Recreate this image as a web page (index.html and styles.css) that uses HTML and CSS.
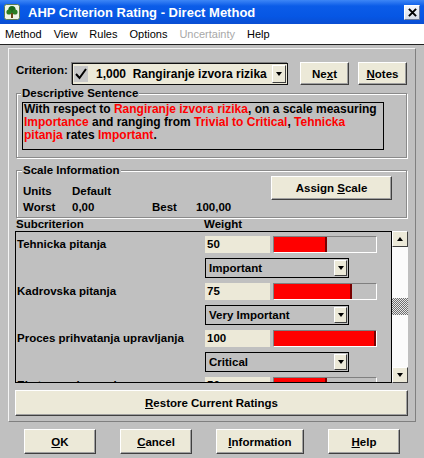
FILE: index.html
```html
<!DOCTYPE html>
<html lang="en">
<head>
    <meta charset="UTF-8">
    <title>AHP Criterion Rating - Direct Method</title>
    <link rel="stylesheet" href="styles.css">
</head>
<body>

    <div class="titlebar">
        <svg class="app-icon" viewBox="0 0 16 16" width="16" height="16">
            <rect x="0.5" y="0.5" width="15" height="15" rx="2" fill="#eef4e6" stroke="#5d7d52"/>
            <circle cx="8" cy="5.5" r="3.6" fill="#1d6a1d"/>
            <circle cx="5" cy="8" r="2.6" fill="#2a7d22"/>
            <circle cx="11" cy="8" r="2.6" fill="#2a7d22"/>
            <rect x="7" y="9" width="2" height="5" fill="#6b4616"/>
        </svg>
        <span class="title">AHP Criterion Rating - Direct Method</span>
        <div class="close">
            <svg viewBox="0 0 10 10" width="9" height="9"><path d="M1 1 L9 9 M9 1 L1 9" stroke="#000" stroke-width="2.2"/></svg>
        </div>
    </div>

    <div class="menubar">
        <span>Method</span>
        <span>View</span>
        <span>Rules</span>
        <span>Options</span>
        <span class="disabled">Uncertainty</span>
        <span>Help</span>
    </div>

    <div class="panel">
        <div class="criterion-row">
            <span class="criterion-label">Criterion:</span>
            <div class="combo">
                <div class="check">
                    <svg viewBox="0 0 14 14" width="14" height="14"><path d="M2 7 L5.5 11 L12 2" fill="none" stroke="#000" stroke-width="2"/></svg>
                </div>
                <span class="combo-text">1,000&nbsp; Rangiranje izvora rizika</span>
                <div class="arrow-btn"><span class="tri"></span></div>
            </div>
            <button class="btn btn-next">Ne<u>x</u>t</button>
            <button class="btn btn-notes"><u>N</u>otes</button>
        </div>

        <fieldset class="group group-desc">
            <legend>Descriptive Sentence</legend>
            <div class="sentence">
                With respect to <span class="hl">Rangiranje izvora rizika</span>, on a scale measuring<br>
                <span class="hl">Importance</span> and ranging from <span class="hl">Trivial to Critical</span>, <span class="hl">Tehnicka</span><br>
                <span class="hl">pitanja</span> rates <span class="hl">Important</span>.
            </div>
        </fieldset>

        <fieldset class="group group-scale">
            <legend>Scale Information</legend>
            <div class="scale-body">
                <div class="scale-info">
                    <span>Units</span><span>Default</span><span></span><span></span>
                    <span>Worst</span><span>0,00</span><span>Best</span><span>100,00</span>
                </div>
                <button class="btn btn-assign">Assign <u>S</u>cale</button>
            </div>
        </fieldset>

        <div class="list-header">
            <span>Subcriterion</span>
            <span>Weight</span>
        </div>

        <div class="list-wrap">
            <div class="list">
                <div class="row">
                    <div class="name">Tehnicka pitanja</div>
                    <div class="weight">
                        <div class="weight-line">
                            <div class="field">50</div>
                            <div class="bar"><div class="fill" style="width: 53px"></div></div>
                        </div>
                        <div class="select">Important<div class="arrow-btn"><span class="tri"></span></div></div>
                    </div>
                </div>
                <div class="row">
                    <div class="name">Kadrovska pitanja</div>
                    <div class="weight">
                        <div class="weight-line">
                            <div class="field">75</div>
                            <div class="bar"><div class="fill" style="width: 78px"></div></div>
                        </div>
                        <div class="select">Very Important<div class="arrow-btn"><span class="tri"></span></div></div>
                    </div>
                </div>
                <div class="row">
                    <div class="name">Proces prihvatanja upravljanja</div>
                    <div class="weight">
                        <div class="weight-line">
                            <div class="field">100</div>
                            <div class="bar"><div class="fill" style="width: 102px"></div></div>
                        </div>
                        <div class="select">Critical<div class="arrow-btn"><span class="tri"></span></div></div>
                    </div>
                </div>
                <div class="row">
                    <div class="name">Eksterno okruzenje</div>
                    <div class="weight">
                        <div class="weight-line">
                            <div class="field">50</div>
                            <div class="bar"><div class="fill" style="width: 53px"></div></div>
                        </div>
                    </div>
                </div>
            </div>
            <div class="scrollbar">
                <div class="sb-btn"><span class="tri tri-up"></span></div>
                <div class="sb-track"><div class="sb-thumb"></div></div>
                <div class="sb-btn"><span class="tri"></span></div>
            </div>
        </div>

        <button class="btn btn-restore"><u>R</u>estore Current Ratings</button>
    </div>

    <div class="footer">
        <button class="btn btn-ok"><u>O</u>K</button>
        <button class="btn btn-cancel"><u>C</u>ancel</button>
        <button class="btn btn-info"><u>I</u>nformation</button>
        <button class="btn btn-help"><u>H</u>elp</button>
    </div>

</body>
</html>
```

FILE: styles.css
```css
* { box-sizing: border-box; }
body { margin: 0; width: 424px; height: 458px; overflow: hidden; background: #c0c0c0; font-family: "Liberation Sans", Arial, sans-serif; font-size: 11.5px; font-weight: bold; color: #000; }

/* title + menu */
.titlebar { height: 24px; display: flex; align-items: center; padding: 0 4px; background: linear-gradient(#3d86f6, #0b5ce8 25%, #0656e4 70%, #0a4ed2); color: #fff; font-size: 13px; }
.app-icon { margin-right: 8px; }
.title { flex: 1; }
.close { width: 16px; height: 15px; display: flex; align-items: center; justify-content: center; background: linear-gradient(#f4f6fb, #d8dde8); border: 1px solid #fff; border-right-color: #6d7a98; border-bottom-color: #6d7a98; }

.menubar { height: 21px; display: flex; align-items: center; gap: 12px; padding-left: 5px; background: #fff; border-bottom: 1px solid #222; font-size: 11px; font-weight: normal; }
.menubar .disabled { color: #a8a8a8; }

/* main panel */
.panel { margin: 3px 8px 0; padding: 0 7px 5px 6px; border: 1px solid; border-color: #f4f4f4 #808080 #808080 #f4f4f4; }

.btn { font-family: inherit; font-size: 11.5px; font-weight: bold; color: #000; background: #ece9d8; border: 1px solid; border-color: #fff #404040 #404040 #fff; box-shadow: inset -1px -1px 0 #a0a0a0; padding: 0; }

.criterion-row { display: flex; align-items: flex-start; height: 25px; margin-top: 12px; padding: 0 1px; }
.criterion-label { width: 56px; margin-top: 3px; }
.combo { width: 216px; height: 22px; margin-top: 2px; display: flex; align-items: center; padding-left: 1px; background: #ece9d8; border: 1px solid #111; box-shadow: -1px -1px 0 #808080; }
.check { width: 14px; height: 16px; background: #c8c8c8; display: flex; align-items: center; }
.combo-text { margin-left: 8px; font-size: 12px; }
.combo .arrow-btn { margin-left: auto; margin-right: 1px; width: 14px; height: 18px; }
.btn-next { width: 49px; height: 23px; margin: 1px 0 0 12px; }
.btn-notes { width: 49px; height: 23px; margin: 1px 0 0 9px; }

.arrow-btn { display: flex; align-items: center; justify-content: center; background: #ece9d8; border: 1px solid; border-color: #fff #404040 #404040 #fff; }
.tri { width: 0; height: 0; border-left: 3.5px solid transparent; border-right: 3.5px solid transparent; border-top: 4px solid #000; }
.tri-up { border-top: none; border-bottom: 4px solid #000; }

/* group boxes */
.group { margin: 0 0 0 1px; width: 391px; border: 1px solid #8a8a8a; box-shadow: 1px 1px 0 #fff, inset 1px 1px 0 #fff; }
.group legend { padding: 0 1px; margin-left: -1px; line-height: 13px; background: #c0c0c0; }
.group-desc { margin-top: 1px; height: 71px; padding: 0 5px; }
.sentence { width: 362px; height: 48px; margin-top: 2px; padding: 0 1px; font-size: 12px; line-height: 13px; white-space: nowrap; overflow: hidden; border: 1px solid #000; }
.hl { color: #f00; }

.group-scale { margin-top: 6px; height: 54px; padding: 0 0 0 6px; }
.scale-body { display: flex; align-items: flex-start; }
.scale-info { display: grid; grid-template-columns: 49px 80px 44px auto; grid-auto-rows: 16px; align-items: center; margin-top: 6px; }
.btn-assign { width: 121px; height: 24px; margin: -1px 14px 0 auto; }

/* subcriterion list */
.list-header { display: grid; grid-template-columns: 188px auto; height: 13px; line-height: 13px; padding-left: 1px; }
.list-wrap { display: flex; height: 152px; }
.list { width: 377px; border: 1px solid #000; overflow: hidden; }
.row { display: grid; grid-template-columns: 188px 172px; height: 47px; padding: 4px 0 0 1px; }
.name { line-height: 16px; }
.weight-line { display: flex; gap: 3px; }
.field { width: 65px; height: 17px; line-height: 17px; padding-left: 2px; background: #ece9d8; }
.bar { width: 104px; height: 17px; border: 1px solid; border-color: #808080 #fff #fff #808080; }
.fill { height: 100%; background: #f00; border-right: 2px solid #7a0000; }
.select { width: 144px; height: 20px; margin-top: 5px; display: flex; align-items: center; padding-left: 3px; border: 1px solid #000; }
.select .arrow-btn { margin-left: auto; margin-right: 1px; width: 13px; height: 16px; }

.scrollbar { width: 16px; display: flex; flex-direction: column; background: #fbfbfb; }
.sb-btn { height: 16px; display: flex; align-items: center; justify-content: center; background: #ece9d8; border: 1px solid; border-color: #fff #404040 #404040 #fff; }
.sb-track { flex: 1; }
.sb-thumb { height: 17px; margin-top: 51px; background: repeating-conic-gradient(#6e6e6e 0 25%, #e8e8e8 0 50%) 0 0 / 2px 2px; }

.btn-restore { display: block; width: 393px; height: 26px; margin-top: 7px; }

/* dialog buttons */
.footer { display: flex; gap: 24px; margin-top: 7px; padding-left: 24px; }
.footer .btn { width: 72px; height: 25px; }
.footer .btn-info { width: 88px; }
```
